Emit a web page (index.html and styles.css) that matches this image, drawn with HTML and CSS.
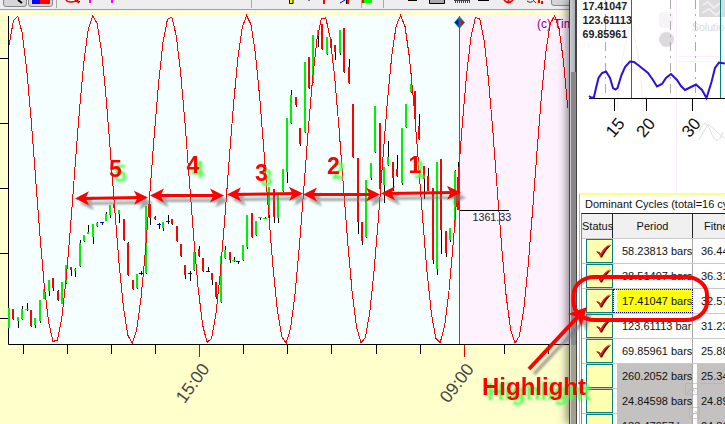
FILE: index.html
```html
<!DOCTYPE html>
<html lang="en">
<head>
  <meta charset="UTF-8">
  <meta name="viewport" content="width=device-width, initial-scale=1.0">
  <title>Dominant Cycles</title>
  <link rel="stylesheet" href="styles.css">
</head>
<body>
  <div class="app">
    <main class="workspace">
      <div class="toolbar">
        <svg width="569" height="11" viewBox="0 0 569 11">
          <path class="tool-btn" d="M3.5 -1V4Q3.5 6.5 6 6.5H24Q26.500 6.500 26.500 4V-1M28.500 -1V4Q28.500 6.500 31 6.500H50Q52.500 6.500 52.500 4V-1M551.500 -1V3Q551.500 5.500 554 5.500H571V-1"/>
          <path d="M18 0L22 3" stroke="#000" stroke-width="2"/>
          <rect x="32" width="8" height="4" fill="#00f"/>
          <rect x="40" width="10" height="4" fill="#f00"/>
          <path d="M56.500 0V8M251.500 0V8M361.500 0V8M383.500 0V8" stroke="#aaa"/>
          <path d="M66 0Q67 2 71 2Q76 2 78 -1M75 0L79 3" fill="none" stroke="#e00" stroke-width="1.500"/>
          <path d="M77 0L80 2" stroke="#000"/>
          <path d="M90 0V3M112 0V3" stroke="#f0f" stroke-width="2"/>
          <path d="M289.500 0V3.500H293V0" fill="#ff0" stroke="#000"/>
          <path d="M309 0V1" stroke="#000"/>
          <path d="M324 0V4M348 0V4" stroke="#f00" stroke-width="2"/>
          <path d="M340 3L345 0" stroke="#00f"/>
          <path d="M346.500 0V4" stroke="#000"/>
          <rect x="362" width="10" height="3" fill="#0f0"/>
          <rect x="362" width="2" height="3" fill="#f00"/>
          <path d="M408 .5H417M478 .5H489" stroke="#000"/>
          <path d="M429.500 -1V3.500H444.500V-1" fill="#aaa" stroke="#000"/>
          <path d="M454 .5H470" stroke="#444"/>
          <path d="M455 2H470" stroke="#444" stroke-width="2" stroke-dasharray="1 1"/>
          <path d="M504 0Q508.500 5 513 0M508.500 0V3" fill="none" stroke="#f00" stroke-width="1.800"/>
          <path d="M527 1Q531 4 534 0M533 0L536 3" fill="none" stroke="#333"/>
          <path d="M539 0V3M542 1V4" stroke="#e00" stroke-width="2"/>
          <path d="M537 1V4" stroke="#fc0"/>
        </svg>
      </div>
      <svg class="price-chart" width="569" height="413" viewBox="0 11 569 413">
        <rect class="past" x="9" y="15" width="450" height="329"/>
        <rect class="future" x="460" y="15" width="109" height="329"/>
        <path class="axis" d="M8.500 16V344.500H569M0 58.500H8M0 123.500H8M0 188.500H8M0 253.500H8M0 318.500H8"/>
        <path class="axis" d="M23.500 345V354M67.500 345V354M111.500 345V354M155.500 345V354M243.500 345V354M287.500 345V354M331.500 345V354M376.500 345V354M420.500 345V354M504.500 345V354M548.500 345V354"/>
        <path class="axis-major" d="M199.500 345V357M464.500 345V357"/>
        <g id="candles" shape-rendering="crispEdges"></g>
        <text class="credit" x="537" y="28">(c) Tim</text>
        <path id="wave" class="wave"/>
        <path class="now" d="M459.500 16V344"/>
        <path d="M459 17.500L454.500 22.500L459 27.500Z" fill="#00f" stroke="#088080"/>
        <path d="M460 17.500L464.500 22.500L460 27.500Z" fill="#f00" stroke="#088080"/>
        <path class="axis" d="M460 210.500H509"/>
        <text class="price" x="472.500" y="220.500">1361.33</text>
        <text class="time" transform="translate(192.500 383) rotate(-54)" dy="6">15:00</text>
        <text class="time" transform="translate(456.700 383) rotate(-53)" dy="6">09:00</text>
      </svg>
    </main>

    <aside class="cycles-window">
      <svg class="spectrum" width="148" height="193" viewBox="577 0 148 193">
        <g class="ghost">
          <rect x="699" y="-1" width="26" height="18" fill="#dcdadd"/>
          <path d="M703 5L708 2L714 8L720 3M702 13L709 9L716 15L722 10" stroke="#eee" stroke-width="2"/>
          <text x="692" y="31" font-size="10.500">Solutio</text>
          <rect x="659" y="12" width="14" height="16" rx="3" fill="#f7f4f7"/>
          <path d="M662 18L666 14L670 18ZM662 23L666 27L670 23Z" fill="#d9d5da"/>
          <circle cx="666.500" cy="39.500" r="7.500" fill="#dcdadc"/>
          <path d="M678 56.500H725M678 61.500H725M676.500 0V193" stroke="#fbeffb"/>
          <path d="M617 110Q621 50 631 25Q641 50 645 140" stroke="#fbeee8"/>
          <path d="M699 132Q705 115 711 132T723 132M699 140L708 124L724 138" stroke="#ddd"/>
        </g>
        <path class="minor-cycle" d="M605.500 0V98M670.500 0V98M695.500 0V98"/>
        <path class="now" d="M631.500 0V98M720.500 0V98"/>
        <path class="axis" d="M589 98.500H725M614.500 99V111M646.500 99V111M692.500 99V111"/>
        <path class="power" d="M589 96L592 98L594 97L596 88L598.500 78L602 73L606 71.500L610 78L613 88L615.500 89.500L617.500 88L621.500 75L625 67L630 61.500L634 62L640 66.500L648 73L653 80L657 86.500L662 84L666 78L671 74L677 80L681 86L685 90L690 87.500L696 84.500L702 90L706.500 98L711.500 82L715 68L719 62.500L725 63.500"/>
        <g class="best">
          <text x="582.500" y="9.800">17.41047</text>
          <text x="582.500" y="24.200">123.61113</text>
          <text x="582.500" y="38">69.85961</text>
        </g>
        <text class="tick" transform="translate(615 127.500) rotate(-50)" dy="6">15</text>
        <text class="tick" transform="translate(645.500 127.500) rotate(-50)" dy="6">20</text>
        <text class="tick" transform="translate(691 127.500) rotate(-50)" dy="6">30</text>
      </svg>
      <section class="cycles">
        <h2>Dominant Cycles (total=16 cy</h2>
        <div class="grid">
          <div class="row head"><span class="status">Status</span><span class="period">Period</span><span class="fitness">Fitne</span></div>
          <div class="row"><span class="status"><svg class="check"><use href="#check"/></svg></span><span class="period">58.23813 bars</span><span class="fitness">36.44</span></div>
          <div class="row"><span class="status"><svg class="check"><use href="#check"/></svg></span><span class="period">38.51497 bars</span><span class="fitness">36.31</span></div>
          <div class="row selected"><span class="status"><svg class="check"><use href="#check"/></svg></span><span class="period">17.41047 bars</span><span class="fitness">32.57</span></div>
          <div class="row"><span class="status"><svg class="check"><use href="#check"/></svg></span><span class="period">123.61113 bar</span><span class="fitness">31.23</span></div>
          <div class="row"><span class="status"><svg class="check"><use href="#check"/></svg></span><span class="period">69.85961 bars</span><span class="fitness">25.88</span></div>
          <div class="row off"><span class="status"></span><span class="period">260.2052 bars</span><span class="fitness">25.34</span></div>
          <div class="row off"><span class="status"></span><span class="period">24.84598 bars</span><span class="fitness">24.89</span></div>
          <div class="row off"><span class="status"></span><span class="period">133.47957 bar</span><span class="fitness">24.81</span></div>
        </div>
      </section>
    </aside>

    <svg class="notes" width="725" height="424" viewBox="0 0 725 424">
      <defs>
        <filter id="soft" x="-20%" y="-50%" width="140%" height="200%"><feGaussianBlur stdDeviation="1.300"/></filter>
        <g id="check">
          <path d="M0 7.500Q2.500 6.500 4.500 9.500Q8 3 15 0Q9.500 5 5.500 13L4 13Q3 9 0 7.500Z" fill="#400" transform="translate(.6 .4)"/>
          <path d="M0 7.500Q2.500 6.500 4.500 9.500Q8 3 14 0Q9 5 5 12.500L4 12.500Q3 9 0 7.500Z" fill="#f01818"/>
        </g>
      </defs>
      <g class="desktop-ghost">
        <path d="M685.500 383.500h12v11h-12zM700.500 383.500h24M689.500 407.500h10v11h-10z"/>
        <path d="M687 393l5 -6l3 6M691 417l5 -6l3 6"/>
      </g>
      <g id="arrow-shadows" class="arrow-shadow" filter="url(#soft)"></g>
      <g id="arrows" class="arrow"></g>
      <rect class="ring" x="573.500" y="277" width="133.500" height="43" rx="21" ry="18"/>
      <g class="count">
        <text x="115.500" y="177">5</text>
        <text x="193" y="173">4</text>
        <text x="261.500" y="181">3</text>
        <text x="333.500" y="173.500">2</text>
        <text x="415" y="173">1</text>
        <text class="word" x="482" y="395">Highlight</text>
      </g>
    </svg>
  </div>
  <script src="chart.js"></script>
</body>
</html>
```
FILE: styles.css
```css
body {
  margin: 0;
  overflow: hidden;
  background: #ffffcc;
  font-family: "Liberation Sans", Arial, sans-serif;
}

svg {
  display: block;
}

.app {
  position: relative;
  display: flex;
  width: 725px;
  height: 424px;
  overflow: hidden;
}

.workspace {
  width: 569px;
  flex: none;
  background: #ffffcc;
}

.toolbar {
  height: 11px;
  background: linear-gradient(#eee 9px, #a0a0a0 9px, #a0a0a0 10px, #f4f4f0 10px);
}

.tool-btn {
  fill: #d6d6d6;
  stroke: #888;
}

.past {
  fill: #f5ffff;
}

.future {
  fill: #fff2ff;
}

.axis {
  fill: none;
  stroke: #000;
}

.axis-major {
  stroke: #e00000;
}

.wave {
  fill: none;
  stroke: #f00;
  shape-rendering: crispEdges;
}

.now {
  stroke: #008080;
}

.credit {
  font-size: 12px;
  fill: #800080;
}

.price {
  font-size: 10.7px;
  fill: #222;
}

.time, .tick {
  font-size: 17.5px;
  text-anchor: middle;
  fill: #444;
}

.tick {
  font-size: 17px;
  fill: #111;
}

/* floating window with its frame */
.cycles-window {
  position: relative;
  flex: none;
  box-sizing: border-box;
  width: 156px;
  height: 424px;
  padding-left: 8px;
  background: linear-gradient(90deg, #444 1.5px, #c8ccd0 1.5px, #a8acb0 6.5px, #444 6.5px, #444 8px, #fff 8px);
  box-shadow: -2px 0 9px rgba(0, 0, 0, 0.5);
}

.cycles-window::before {
  content: "";
  position: absolute;
  left: 2px;
  top: 72px;
  width: 5px;
  bottom: 0;
  background: linear-gradient(#8a8788 273px, #a0a08c 273px);
}

.ghost {
  fill: #dcd8dc;
}

.ghost path {
  fill: none;
}

.minor-cycle {
  stroke: #aaa;
  stroke-dasharray: 9 5 2 5;
}

.power {
  fill: none;
  stroke: #2a10d8;
  stroke-width: 2;
}

.best {
  font-size: 10.7px;
  font-weight: bold;
  fill: #222;
}

.cycles {
  border-top: 2px solid #ffff80;
  border-left: 1px solid #bbb;
  margin-left: 2px;
  height: 229px;
  font-size: 11px;
  color: #111;
  white-space: nowrap;
  overflow: hidden;
}

.cycles h2 {
  margin: 0;
  padding: 2px 0 0 5px;
  height: 16px;
  line-height: 14px;
  font-size: 11px;
  font-weight: normal;
}

.grid {
  margin-left: 1px;
  width: 150px;
  border-top: 1px solid #222;
  border-left: 1px solid #888;
}

.row {
  display: flex;
  height: 25px;
  box-sizing: border-box;
  line-height: 24px;
  border-bottom: 1px solid #c8c8c8;
}

.row span {
  box-sizing: border-box;
  flex: none;
}

.status {
  width: 27px;
  height: 24px;
  margin-left: 4px;
  background: #ffffb0;
  border: 1px solid #088080;
}

.check {
  width: 16px;
  height: 14px;
  margin: 4px 0 0 9px;
}

.period {
  width: 80px;
  padding-left: 9px;
  border-right: 1px solid #a8a8a8;
  overflow: hidden;
}

.fitness {
  width: 60px;
  padding-left: 8px;
}

.head {
  background: #f0f0f0;
}

.head .status {
  width: 31px;
  margin: 0;
  background: none;
  border: 0;
  border-right: 1px solid #222;
}

.head .period {
  padding: 0;
  text-align: center;
  border-color: #222;
}

.head .fitness {
  padding-left: 11px;
}

.selected .period {
  border: 1px dotted #00a;
  padding-left: 8px;
  line-height: 22px;
  background: linear-gradient(90deg, #fff 3px, #ffff10 3px);
}

.off .period, .off .fitness {
  background: linear-gradient(90deg, #fff 4px, #c4c2c1 4px);
}

.off {
  border-color: #c4c2c1;
}

.desktop-ghost {
  fill: none;
  stroke: #b4acb4;
  opacity: 0.6;
}

.arrow, .arrow-shadow {
  fill: #f00;
  stroke: #f00;
  stroke-width: 3;
}

.arrow-shadow {
  fill: #777;
  stroke: #777;
  opacity: 0.65;
}

.ring {
  fill: none;
  stroke: #f00;
  stroke-width: 4;
}

.count {
  font-size: 23px;
  font-weight: bold;
  text-anchor: middle;
  fill: #f00;
  filter: drop-shadow(5px 5px 1px #50ff50);
}

.count .word {
  font-size: 24px;
  text-anchor: start;
}

.notes {
  position: absolute;
  left: 0;
  top: 0;
}
```
FILE: chart.js
```javascript
const svgNS = "http://www.w3.org/2000/svg";

// x, body top, body bottom, color, wick top, wick bottom
const candles = [
  [9, 308, 328, "g"], [13, 309, 319, "r", 309, 320], [18, 317, 321, "g", 317, 328], [22, 309, 319, "g", 306, 320],
  [27, 309, 310, "g", 303, 311], [31, 310, 326, "r", 310, 327], [35, 318, 325, "g", 318, 328], [40, 300, 321, "g", 300, 323],
  [44, 289, 299, "g"], [49, 280, 291, "g", 280, 296], [53, 278, 288, "r", 278, 291], [58, 291, 300, "r", 290, 301],
  [62, 282, 304, "g"], [66, 265, 283, "g", 265, 284], [71, 267, 270, "r", 267, 276], [75, 269, 271, "g", 268, 277],
  [80, 243, 266, "g", 240, 267], [84, 235, 241, "g", 235, 242], [88, 232, 234, "g", 225, 234], [93, 224, 237, "g", 224, 244],
  [97, 223, 226, "g", 222, 227], [102, 222, 223, "b", 222, 225], [106, 214, 221, "g", 212, 221], [110, 205, 215, "g", 205, 218],
  [114, 204, 208, "r", 203, 212], [119, 210, 214, "g", 210, 223], [124, 219, 240, "r", 219, 241], [128, 243, 275, "r", 242, 276],
  [133, 280, 289, "r", 280, 290], [137, 274, 288, "g", 274, 289], [141, 273, 274, "k", 271, 275], [146, 206, 273, "g", 206, 274],
  [150, 204, 218, "r", 204, 225], [155, 217, 219, "r", 216, 220], [159, 224, 225, "b", 223, 229], [163, 222, 228, "g", 222, 231],
  [168, 221, 222, "b", 215, 224], [172, 219, 224, "r", 219, 225], [177, 226, 241, "r", 226, 242], [181, 244, 256, "r", 244, 257],
  [185, 265, 275, "r", 265, 279], [190, 273, 274, "b", 271, 281], [194, 252, 270, "g", 252, 271], [199, 249, 256, "r", 246, 257],
  [203, 258, 271, "r", 258, 272], [208, 271, 272, "b", 267, 272], [212, 273, 280, "r", 273, 285], [216, 282, 297, "r", 282, 299],
  [221, 256, 302, "g", 256, 303], [225, 250, 258, "g", 246, 259], [230, 252, 260, "r", 252, 263], [234, 260, 261, "g", 257, 262],
  [238, 261, 262, "b", 261, 264], [243, 245, 260, "g", 245, 261], [247, 215, 247, "g", 215, 249], [252, 213, 237, "r", 213, 238],
  [256, 221, 235, "g", 221, 236], [260, 217, 218, "g", 217, 220], [265, 218, 219, "g", 217, 219], [269, 187, 215, "g", 187, 218],
  [274, 189, 217, "r", 189, 223], [278, 195, 218, "g", 195, 223], [283, 169, 191, "g", 169, 192], [287, 118, 172, "g", 118, 183],
  [291, 95, 123, "g", 90, 124], [296, 97, 105, "r", 97, 107], [300, 128, 144, "r", 128, 146], [305, 62, 132, "g", 62, 133],
  [309, 57, 88, "r", 57, 89], [313, 35, 82, "g", 35, 83], [318, 30, 36, "g", 30, 47], [322, 24, 49, "r", 24, 50],
  [327, 37, 54, "g", 37, 55], [331, 39, 48, "r"], [335, 45, 52, "r", 45, 60], [340, 30, 53, "g", 30, 55],
  [344, 28, 72, "r", 28, 73], [349, 67, 83, "r", 59, 84], [353, 104, 157, "r", 104, 158], [358, 158, 222, "r", 158, 234],
  [362, 222, 241, "r", 222, 245], [366, 180, 237, "g", 180, 238], [371, 163, 178, "g", 163, 180], [375, 106, 152, "g", 106, 153],
  [380, 123, 189, "r"], [384, 167, 185, "g", 167, 203], [388, 157, 165, "g", 141, 166], [393, 162, 178, "r", 162, 191],
  [397, 169, 176, "r", 155, 177], [402, 128, 183, "g", 128, 185], [406, 104, 127, "g", 104, 128], [411, 84, 92, "g", 73, 93],
  [415, 91, 119, "r"], [419, 126, 139, "r", 114, 140], [424, 166, 179, "r", 166, 199], [428, 176, 191, "r", 168, 191],
  [433, 188, 260, "r", 188, 264], [437, 162, 269, "g", 162, 275], [441, 159, 230, "r", 159, 254], [446, 231, 253, "r", 231, 257],
  [450, 228, 240, "g", 228, 242], [455, 171, 227, "g", 170, 227], [458, 177, 210, "r", 162, 210]
];
const colors = { g: "#00f000", r: "#ff0000", b: "#0000ff", k: "#000000" };

function addRect(parent, x, y, w, h, fill) {
  const rect = document.createElementNS(svgNS, "rect");
  rect.setAttribute("x", x);
  rect.setAttribute("y", y);
  rect.setAttribute("width", w);
  rect.setAttribute("height", h);
  rect.setAttribute("fill", fill);
  parent.appendChild(rect);
}

function drawCandles() {
  const group = document.querySelector("#candles");
  candles.forEach(([x, top, bottom, color, high, low]) => {
    if (high !== undefined) {
      addRect(group, x, high, 1, low - high, "#000");
    }
    const flat = bottom - top === 1;
    addRect(group, flat ? x - 2 : x - 1, top, flat ? 4 : 2, bottom - top, colors[color]);
  });
}

// one wave sample per bar
function drawWave() {
  let d = "";
  for (let x = 9; x < 572; x += 4.4) {
    const y = 179.5 - 164 * Math.cos(2 * Math.PI * (x - 16.5) / 76.8);
    d += (d ? "L" : "M") + x.toFixed(1) + " " + y.toFixed(1);
  }
  document.querySelector("#wave").setAttribute("d", d);
}

function drawArrow(x1, y1, x2, y2, double, scale = 1) {
  const len = Math.hypot(x2 - x1, y2 - y1) / scale;
  const angle = Math.atan2(y2 - y1, x2 - x1) * 180 / Math.PI;
  const start = double ? 8 : 0;
  let inner = `<path d="M${start} 0H${len - 8}"/><path stroke="none" d="M${len} 0l-14 -7l3.500 7l-3.500 7z"/>`;
  if (double) {
    inner += '<path stroke="none" d="M0 0l14 -7l-3.500 7l3.500 7z"/>';
  }
  document.querySelector("#arrows").innerHTML += `<g transform="translate(${x1} ${y1}) rotate(${angle}) scale(${scale})">${inner}</g>`;
  document.querySelector("#arrow-shadows").innerHTML += `<g transform="translate(${x1 + 5} ${y1 + 5}) rotate(${angle}) scale(${scale})">${inner}</g>`;
}

drawCandles();
drawWave();
drawArrow(75, 198.5, 148, 197.5, true);
drawArrow(150, 195.5, 224, 195.5, true);
drawArrow(227, 194.5, 303, 193.5, true);
drawArrow(303, 194.5, 380, 194.5, true);
drawArrow(381, 193.5, 461, 192.5, true);
drawArrow(529, 369, 587, 307, false, 1.3);
```
